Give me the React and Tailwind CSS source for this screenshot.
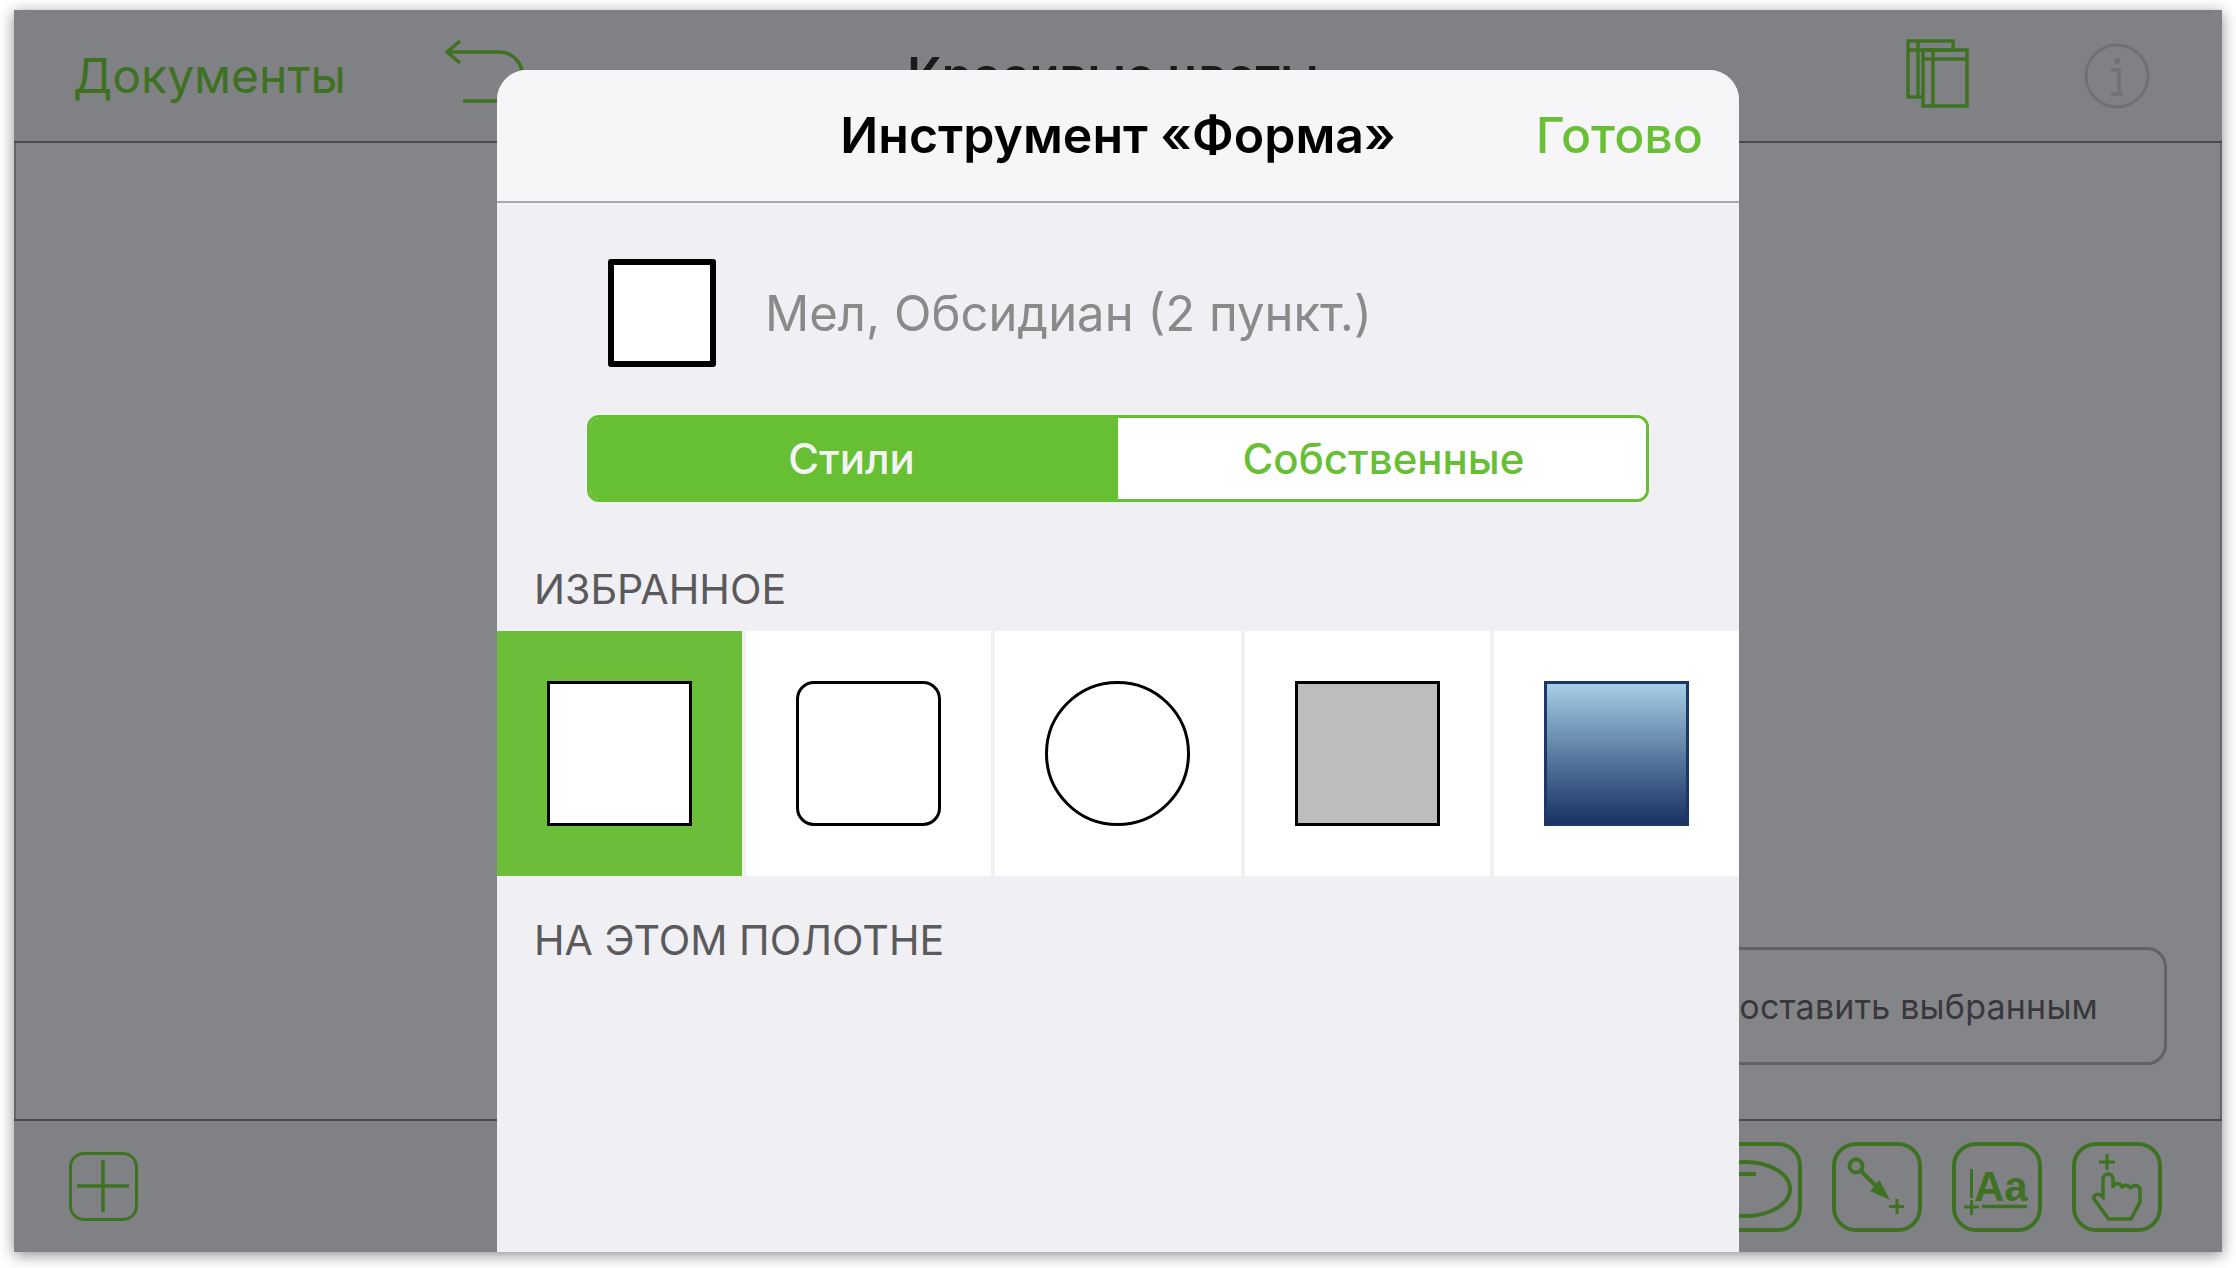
import React from 'react';

const GREEN = '#3e7222';

const ToolButton = ({ children, className = '' }) => (
  <div className={`h-[90px] w-[90px] rounded-[24px] border-[4px] border-[#3e7222] ${className}`}>
    <svg viewBox="0 0 90 90" className="-m-[4px] h-[90px] w-[90px] overflow-visible" fill="none" stroke={GREEN} strokeWidth="4">
      {children}
    </svg>
  </div>
);

const BackIcon = () => (
  <svg width="90" height="64" viewBox="0 0 90 64" fill="none" stroke={GREEN} strokeWidth="3.5">
    <path d="M15 2 2 13 15 24" />
    <path d="M2 13H54C68 13 78 24 78 40C78 54 70 62 56 62H18" />
  </svg>
);

const SheetsIcon = () => (
  <svg width="63" height="69" viewBox="0 0 63 69" fill="none" stroke={GREEN} strokeWidth="3.5">
    <path d="M47 11V2H2V58H17" />
    <path d="M12 2V58M2 11H47" />
    <rect x="17" y="11" width="44" height="56" />
    <path d="M27 11V67M17 20H61" />
  </svg>
);

const InfoIcon = () => (
  <svg width="66" height="66" viewBox="0 0 66 66" fill="none" stroke="#717175" strokeWidth="3">
    <circle cx="33" cy="33" r="31" />
    <circle cx="33" cy="18" r="3.2" fill="#717175" stroke="none" />
    <path d="M27 27H35V50M27 51H39" strokeWidth="3.5" />
  </svg>
);

const swatches = [
  { cell: 'bg-[#6bbd3a]', shape: 'border-black bg-white' },
  { cell: 'bg-white', shape: 'rounded-[18px] border-black bg-white' },
  { cell: 'bg-white', shape: 'rounded-full border-black bg-white' },
  { cell: 'bg-white', shape: 'border-black bg-[#bdbdbd]' },
  { cell: 'bg-white', shape: 'border-[#1d3767] bg-gradient-to-b from-[#a6cfe6] to-[#1b3363]' },
];

export default function App() {
  return (
    <div className="h-[1268px] w-[2236px] overflow-hidden bg-white pt-[10px] pr-[14px] pb-[16px] pl-[14px] font-[Inter,sans-serif]">
      <div className="relative flex h-full flex-col bg-[#848589] shadow-[0_3px_14px_rgba(0,0,0,0.45)]">
        <header className="flex h-[133px] items-center border-b-[2px] border-[#4a4a4e] bg-[#808185] pr-[72px] pl-[59px]">
          <span className="text-[48px] text-[#3e7222]">Документы</span>
          <div className="mt-[-9px] ml-[99px]">
            <BackIcon />
          </div>
          <div className="flex-1 pr-[215px] text-center text-[49px] font-semibold text-[#1a1a1c]">Красивые цветы</div>
          <div className="mt-[-4px]">
            <SheetsIcon />
          </div>
          <div className="ml-[115px]">
            <InfoIcon />
          </div>
        </header>

        <main className="flex flex-1 justify-end border-x-[2px] border-[#66666a] pt-[804px] pr-[53px]">
          <div className="flex h-[118px] w-[900px] items-center justify-end rounded-[20px] border-[3px] border-[#626266] pr-[66px] text-[34px] tracking-[0.2px] text-[#38383c]">
            Сопоставить выбранным
          </div>
        </main>

        <footer className="flex h-[133px] items-center justify-between border-t-[2px] border-[#4a4a4e] bg-[#808185] pr-[60px] pl-[55px]">
          <div className="h-[69px] w-[69px] rounded-[15px] border-[3.5px] border-[#3e7222]">
            <svg viewBox="0 0 62 62" className="h-[62px] w-[62px]" fill="none" stroke={GREEN} strokeWidth="3.5">
              <path d="M31 5V57M5 31H57" />
            </svg>
          </div>
          <div className="flex gap-[30px]">
            <ToolButton>
              <ellipse cx="33" cy="47" rx="45" ry="27" />
              <path d="M27 32H44" />
            </ToolButton>
            <ToolButton>
              <circle cx="24" cy="24" r="6.5" />
              <path d="M29 29 46 46" />
              <path d="M58 58 38 49 47.5 38Z" fill={GREEN} stroke="none" />
              <path d="M65 57V72M57 64.5H72" strokeWidth="3" />
            </ToolButton>
            <ToolButton>
              <path d="M19.5 27V56M19.5 58V73M12 65H27" strokeWidth="3" />
              <text x="22" y="59" fontFamily="'Liberation Sans', sans-serif" fontWeight="700" fontSize="42" fill={GREEN} stroke="none">Aa</text>
              <path d="M30 64.5H75" strokeWidth="3.5" />
            </ToolButton>
            <ToolButton>
              <path d="M35 12V28M27 20H43" strokeWidth="3" />
              <path
                d="M31 55V37a5 5 0 0 1 10 0V46a4.5 4.5 0 0 1 9 0a4.5 4.5 0 0 1 8.5 1a4.5 4.5 0 0 1 9.5 3V60L59 77H36.5L22 57C21 53 26 50 31 55Z"
                strokeWidth="3.5"
              />
            </ToolButton>
          </div>
        </footer>

        {/* sheet over the document */}
        <section className="absolute top-[60px] bottom-0 left-[483px] flex w-[1242px] flex-col rounded-t-[30px] bg-[#efeff4]">
          <div className="grid h-[133px] grid-cols-[1fr_auto_1fr] items-center rounded-t-[30px] border-b-[2px] border-[#a9a9ad] bg-[#f6f6f8]">
            <span />
            <h1 className="text-[50px] font-semibold text-black">Инструмент «Форма»</h1>
            <span className="justify-self-end pr-[36px] text-[50px] font-medium text-[#69bf35]">Готово</span>
          </div>

          <div className="mt-[56px] flex items-center gap-[49px] pl-[111px]">
            <div className="h-[108px] w-[108px] rounded-[3px] border-[6px] border-black bg-white" />
            <span className="pt-[2px] text-[49px] text-[#8a8a8a]">Мел, Обсидиан (2 пункт.)</span>
          </div>

          <div className="mx-[90px] mt-[48px] grid h-[87px] grid-cols-2 overflow-hidden rounded-[12px] border-[3px] border-[#67bf34] text-[42px] font-medium">
            <div className="flex items-center justify-center bg-[#67bf34] pr-[5px] text-[#f4f4f4]">Стили</div>
            <div className="flex items-center justify-center bg-white pl-[3px] text-[#67bf34]">Собственные</div>
          </div>

          <h2 className="flex h-[129px] items-end pb-[10px] pl-[37px] text-[41.2px] text-[#5a5a5c]">ИЗБРАННОЕ</h2>

          <div className="grid grid-cols-5 gap-[4px]">
            {swatches.map((s, i) => (
              <div key={i} className={`flex h-[245px] items-center justify-center ${s.cell}`}>
                <div className={`h-[145px] w-[145px] border-[3.5px] ${s.shape}`} />
              </div>
            ))}
          </div>

          <h2 className="pt-[34px] pl-[37px] text-[41.2px] text-[#5a5a5c]">НА ЭТОМ ПОЛОТНЕ</h2>
        </section>
      </div>
    </div>
  );
}
